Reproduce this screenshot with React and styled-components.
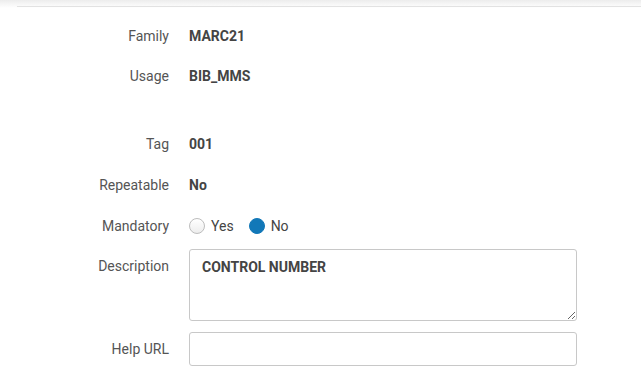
import styled, { createGlobalStyle } from 'styled-components';

const GlobalStyle = createGlobalStyle`
  body {
    margin: 0;
    background: #fff;
    font-family: Roboto, 'Liberation Sans', sans-serif;
    font-size: 14px;
    color: #444;
  }
`;

const fields = [
  { label: 'Family', value: 'MARC21' },
  { label: 'Usage', value: 'BIB_MMS' },
];

const tagFields = [
  { label: 'Tag', value: '001' },
  { label: 'Repeatable', value: 'No' },
];

const App = () => (
  <>
    <GlobalStyle />
    <Page>
      <TopShade>
        <Divider />
      </TopShade>
      <Form>
        {fields.map((f) => (
          <Row key={f.label}>
            <Label>{f.label}</Label>
            <Value>{f.value}</Value>
          </Row>
        ))}
        <Spacer />
        {tagFields.map((f) => (
          <Row key={f.label} $h={41}>
            <Label>{f.label}</Label>
            <Value>{f.value}</Value>
          </Row>
        ))}
        <Row $h={41}>
          <Label>Mandatory</Label>
          <RadioGroup>
            <RadioOption>
              <Radio />
              Yes
            </RadioOption>
            <RadioOption>
              <Radio checked />
              No
            </RadioOption>
          </RadioGroup>
        </Row>
        <FieldRow>
          <Label $top>Description</Label>
          <TextArea readOnly defaultValue="CONTROL NUMBER" />
        </FieldRow>
        <FieldRow>
          <Label>Help URL</Label>
          <Input readOnly />
        </FieldRow>
      </Form>
    </Page>
  </>
);

export default App;

const Page = styled.div`
  width: 641px;
  height: 381px;
  overflow: hidden;
  background: #fff;
`;

const TopShade = styled.div`
  height: 8px;
  padding-left: 17px;
  background: linear-gradient(to bottom, #ececec 0px, #f6f6f6 4px, #ffffff 8px);
  display: flex;
  align-items: flex-end;
  padding-bottom: 1px;
  box-sizing: border-box;
`;

const Divider = styled.div`
  flex: 1;
  height: 1px;
  background: #e2e2e2;
`;

const Form = styled.div`
  padding-top: 8px;
  display: flex;
  flex-direction: column;
`;

const Row = styled.div`
  display: grid;
  grid-template-columns: 169px 388px;
  column-gap: 20px;
  align-items: center;
  height: ${(p) => p.$h || 40}px;
`;

const FieldRow = styled.div`
  display: grid;
  grid-template-columns: 169px 388px;
  column-gap: 20px;
  align-items: center;
  margin-top: 3px;
  & + & {
    margin-top: 11px;
  }
`;

const Spacer = styled.div`
  height: 27px;
`;

const Label = styled.div`
  text-align: right;
  color: #555;
  font-size: 14px;
  align-self: ${(p) => (p.$top ? 'start' : 'center')};
  padding-top: ${(p) => (p.$top ? '9px' : '0')};
`;

const Value = styled.div`
  font-weight: 700;
  color: #444;
  font-size: 14px;
`;

const RadioGroup = styled.div`
  display: flex;
  align-items: center;
  gap: 15px;
`;

const RadioOption = styled.label`
  display: flex;
  align-items: center;
  gap: 6px;
  color: #444;
  font-size: 14px;
`;

const Radio = styled.span`
  width: 16px;
  height: 16px;
  border-radius: 50%;
  box-sizing: border-box;
  background: ${(p) => (p.checked ? '#1278b8' : 'linear-gradient(#fff, #ededed)')};
  border: 1px solid ${(p) => (p.checked ? '#1278b8' : '#bdbdbd')};
`;

const TextArea = styled.textarea`
  width: 388px;
  height: 72px;
  box-sizing: border-box;
  border: 1px solid #c8c8c8;
  border-radius: 3px;
  padding: 9px 12px;
  font-family: Roboto, 'Liberation Sans', sans-serif;
  font-size: 14px;
  font-weight: 700;
  color: #444;
  outline: none;
  resize: vertical;
  margin: 0;
`;

const Input = styled.input`
  width: 388px;
  height: 34px;
  box-sizing: border-box;
  border: 1px solid #c8c8c8;
  border-radius: 3px;
  padding: 0 12px;
  font-family: Roboto, 'Liberation Sans', sans-serif;
  font-size: 14px;
  outline: none;
  margin: 0;
`;
